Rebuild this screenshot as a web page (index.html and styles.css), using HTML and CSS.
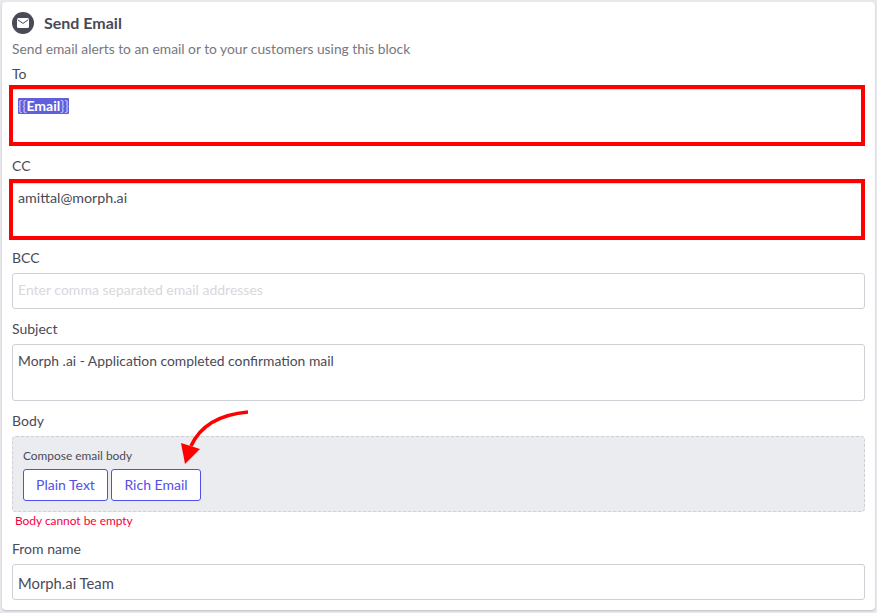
FILE: index.html
```html
<!DOCTYPE html>
<html lang="en">
<head>
<meta charset="utf-8">
<title>Send Email</title>
<link rel="stylesheet" href="styles.css">
</head>
<body>
<main class="card">
  <header class="head">
    <span class="head-icon">
      <svg width="12" height="10" viewBox="0 0 12 10"><rect width="12" height="10" rx="1.5" fill="#fff"/><path d="M.8 1.8 6 5.4 11.2 1.8" fill="none" stroke="#4a4a57" stroke-width="1"/></svg>
    </span>
    <h1 class="title">Send Email</h1>
  </header>
  <p class="desc">Send email alerts to an email or to your customers using this block</p>

  <label class="label label-to">To</label>
  <div class="field field-flag"><span class="token">{{<b>Email</b>}}</span></div>

  <label class="label label-cc">CC</label>
  <div class="field field-flag field-cc">amittal@morph.ai</div>

  <label class="label label-bcc">BCC</label>
  <div class="field field-single placeholder">Enter comma separated email addresses</div>

  <label class="label label-subject">Subject</label>
  <div class="field field-subject">Morph .ai - Application completed confirmation mail</div>

  <label class="label label-body">Body</label>
  <section class="compose">
    <p class="compose-title">Compose email body</p>
    <div class="compose-actions">
      <button class="btn btn-plain" type="button">Plain Text</button>
      <button class="btn btn-rich" type="button">Rich Email</button>
    </div>
    <svg class="arrow" width="70" height="60" viewBox="0 0 70 60">
      <path d="M68 4C45 6 22 14 11 38" fill="none" stroke="#f00" stroke-width="3.6"/>
      <path d="M1 35 L20 41 L5 56 Z" fill="#f00"/>
    </svg>
  </section>
  <p class="error">Body cannot be empty</p>

  <label class="label label-from">From name</label>
  <div class="field field-single field-from">Morph.ai Team</div>
</main>
</body>
</html>
```
FILE: styles.css
```css
* { box-sizing: border-box; }
html, body { height: 100%; }
body {
  margin: 0;
  padding: 2px 2px 3px;
  background: #e8e8ed;
  font-family: Lato, "Open Sans", sans-serif;
  color: #4a4a57;
  overflow: hidden;
}
.card {
  height: 608px;
  padding: 10px 10px 0;
  background: #fff;
  border-radius: 4px;
  box-shadow: 0 1px 2px rgba(0, 0, 0, .18);
  display: flex;
  flex-direction: column;
  align-items: stretch;
}
.head { display: flex; align-items: center; height: 22px; }
.head-icon {
  width: 22px;
  height: 22px;
  border-radius: 50%;
  background: #4a4a57;
  display: flex;
  align-items: center;
  justify-content: center;
  margin-right: 10px;
}
.title { margin: 0; font-size: 16px; line-height: 22px; font-weight: 700; color: #4a4a57; }
.desc { margin: 6px 0 0; font-size: 13.8px; line-height: 18px; color: #77777f; }
.label { display: block; font-size: 14px; line-height: 18px; color: #4a4a57; }
.label-to { margin-top: 7px; }
.label-cc { margin-top: 11px; }
.label-bcc { margin-top: 9px; }
.label-subject { margin-top: 11px; }
.label-body { margin-top: 11px; }
.label-from { margin-top: 11px; }
.field {
  border: 1px solid #cfcfd6;
  border-radius: 3px;
  padding: 7px 5px;
  font-size: 14px;
  line-height: 18px;
  color: #4a4a57;
  background: #fff;
  margin-top: 6px;
}
.field-flag {
  height: 61px;
  margin-top: 2px;
  margin-left: -3px;
  border: 4px solid #f00;
  border-radius: 0;
  padding: 8px 5px;
  box-shadow: inset 0 1px #dcdce0;
}
.field-cc { font-size: 14.25px; margin-top: 4px; padding-top: 6px; }
.field-single { height: 36px; }
.field-from { font-size: 14.8px; padding-top: 9px; }
.field-subject { height: 57px; font-size: 13.87px; }
.placeholder { color: #d8d8dc; }
.token {
  display: inline-block;
  background: #5f5fdc;
  color: #c9c9f5;
  line-height: 16px;
  font-size: 14px;
  border-radius: 1px;
}
.token b { color: #fff; font-weight: 700; }
.compose {
  position: relative;
  height: 76px;
  margin-top: 6px;
  padding: 11px 10px 0;
  background: #ebecf0;
  border: 1px dashed #cfcfd6;
  border-radius: 4px;
}
.compose-title { margin: 0; font-size: 11.9px; line-height: 16px; color: #4a4a57; }
.compose-actions { display: flex; gap: 3px; margin-top: 5px; }
.btn {
  height: 32px;
  padding: 0;
  background: #fff;
  border: 1px solid #5050e6;
  border-radius: 3px;
  color: #5050e6;
  font: 14px/18px Lato, sans-serif;
}
.btn-plain { width: 85px; }
.btn-rich { width: 90px; }
.arrow { position: absolute; left: 167px; top: -29px; }
.error { margin: 1px 0 0 3px; font-size: 11.9px; line-height: 16px; color: #f5003d; }
```
